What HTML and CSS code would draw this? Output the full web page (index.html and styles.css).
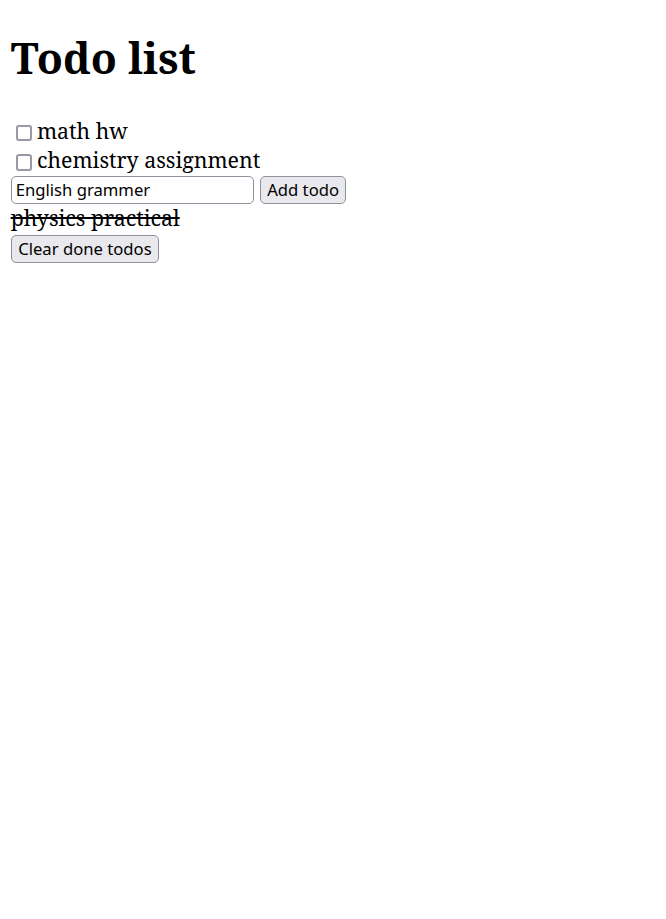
FILE: index.html
```html
<!DOCTYPE html>
<html>
<head>
<meta charset="utf-8">
<title>Todo list</title>
<link rel="stylesheet" href="styles.css">
</head>
<body>
<h1 class="title">Todo list</h1>
<div class="todo"><input type="checkbox" class="check"><span class="label">math hw</span></div>
<div class="todo"><input type="checkbox" class="check"><span class="label">chemistry assignment</span></div>
<form class="add-form" onsubmit="return false">
<input type="text" class="field" value="English grammer">
<button type="button" class="btn">Add todo</button>
</form>
<div class="done">physics practical</div>
<div class="actions"><button type="button" class="btn btn-wide">Clear done todos</button></div>
</body>
</html>
```

FILE: styles.css
```css
html {
  background: #fff;
}
body {
  margin: 0;
  padding: 0 10.67px;
  font-family: "Noto Serif", "DejaVu Serif", serif;
  font-size: 21.33px;
  color: #000;
}
.title {
  margin: 28.3px 0 29px;
  font-size: 42.67px;
  font-weight: 700;
}
.todo {
  display: flex;
  align-items: flex-start;
  height: 29.06px;
}
.check {
  appearance: none;
  -webkit-appearance: none;
  box-sizing: border-box;
  width: 16.5px;
  height: 16.5px;
  margin: 8.7px 4.8px 0 5px;
  border: 2px solid #9a98a6;
  border-radius: 3px;
  background: #fff;
  flex: none;
}
.add-form {
  display: flex;
  align-items: flex-start;
  gap: 6px;
  margin: 0;
  padding-top: 1.5px;
  height: 27.5px;
}
.field,
.btn {
  font-family: "Noto Sans", sans-serif;
  font-size: 16.67px;
  color: #000;
  box-sizing: border-box;
  height: 28px;
}
.field {
  width: 243.5px;
  padding: 0 4px;
  border: 1.33px solid #8f8f9d;
  border-radius: 5px;
  background: #fff;
}
.btn {
  padding: 0 6px;
  border: 1.33px solid #8f8f9d;
  border-radius: 5px;
  background: #e9e9ed;
}
.btn-wide {
  padding: 0 6.5px;
}
.done {
  text-decoration: line-through;
  height: 29.06px;
}
.actions {
  padding-top: 0;
}
```
